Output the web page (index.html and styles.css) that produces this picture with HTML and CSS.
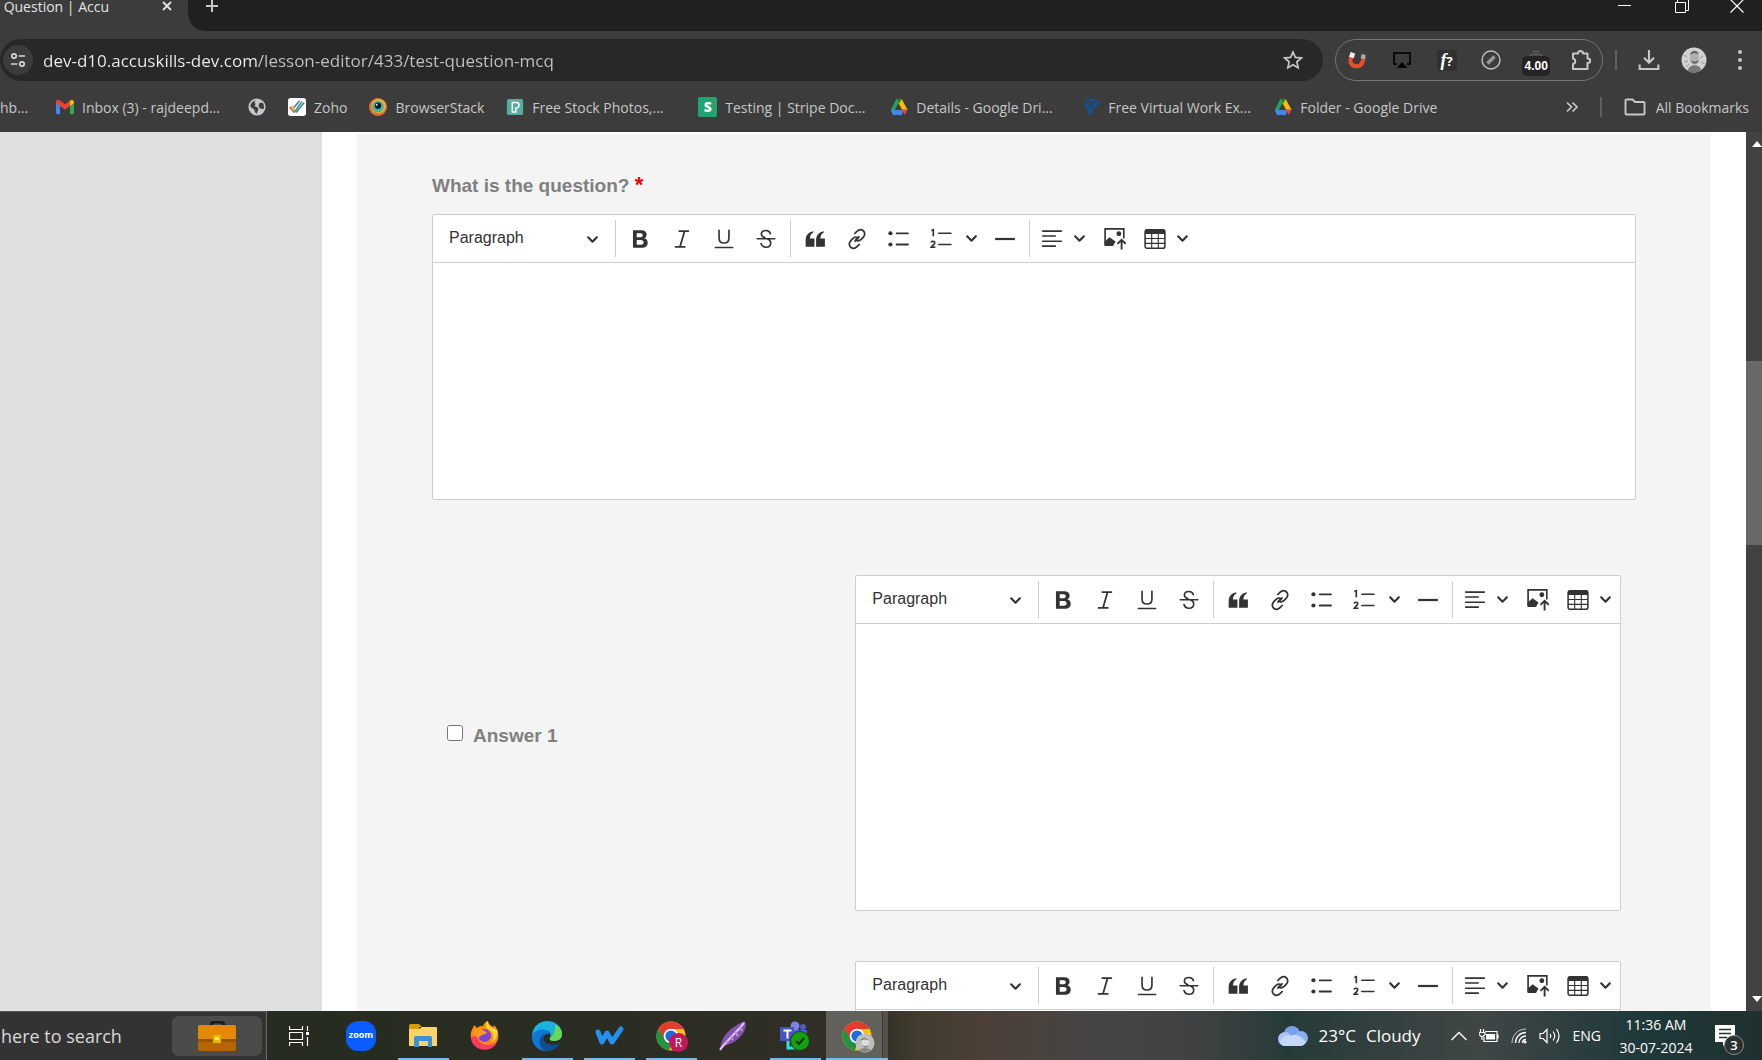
FILE: index.html
```html
<!DOCTYPE html>
<html lang="en">
<head>
    <meta charset="UTF-8">
    <meta name="viewport" content="width=device-width, initial-scale=1.0">
    <title>Test Question | Accuskills</title>
    <link rel="stylesheet" href="styles.css">
</head>
<body>

<!-- Shared icons -->
<svg class="sprite" aria-hidden="true">
    <symbol id="i-chevron" viewBox="0 0 12 12"><path d="M2 4l4 4 4-4" fill="none" stroke="currentColor" stroke-width="2" stroke-linecap="round" stroke-linejoin="round"/></symbol>
    <symbol id="i-bold" viewBox="0 0 20 20"><path fill="currentColor" fill-rule="evenodd" d="M3.6 2h7.6c3.2 0 4.8 1.500 4.8 3.900 0 1.700-.8 2.900-2.200 3.500 2 .5 3.200 1.900 3.200 4 0 2.900-2 4.600-5.400 4.600h-8zM7 4.700v3.600h3.500c1.300 0 2-.7 2-1.800s-.7-1.800-2-1.800zm0 6.100v4.400h3.900c1.600 0 2.400-.8 2.400-2.200s-.8-2.200-2.400-2.200z"/></symbol>
    <symbol id="i-italic" viewBox="0 0 20 20"><path d="M7.500 2.800h8.300M4.200 17.200h8.300M12.300 3L8.200 17" fill="none" stroke="currentColor" stroke-width="1.600" stroke-linecap="round"/></symbol>
    <symbol id="i-underline" viewBox="0 0 20 20"><path d="M5.500 2v7c0 3 1.700 4.600 4.500 4.600S14.500 12 14.500 9V2M2.200 17.700h15.600" fill="none" stroke="currentColor" stroke-width="1.500" stroke-linecap="round"/></symbol>
    <symbol id="i-strike" viewBox="0 0 20 20"><path d="M14 5.200C13.400 3.200 12 2.300 10 2.300c-2.500 0-4.200 1.300-4.200 3.200 0 1.800 1.200 2.800 3.300 3.500M2 9.800h16M11.500 10c1.800.7 2.800 1.700 2.800 3.600 0 2.400-1.700 3.900-4.300 3.900-2.500 0-4-1.200-4.500-3.400" fill="none" stroke="currentColor" stroke-width="1.500" stroke-linecap="round"/></symbol>
    <symbol id="i-quote" viewBox="0 0 20 20"><path fill="currentColor" d="M1.500 17v-6c0-4 2.500-7.300 7-8v1.100C6.500 5 5.500 6.800 5.400 9.500H9.500V17zm9.500 0v-6c0-4 2.500-7.300 7-8v1.100c-2 .9-3 2.700-3.100 5.400H19V17z"/></symbol>
    <symbol id="i-link" viewBox="0 0 20 20"><g fill="none" stroke="currentColor" stroke-width="1.600" stroke-linecap="round"><path d="M8 5l1.700-1.700c2-2 4.400-2.200 6-.8 1.800 1.600 1.700 4.100-.1 6l-1.800 1.900c-1.600 1.500-3.600 1.500-5 .3M12 15l-1.700 1.700c-2 2-4.400 2.200-6 .8-1.800-1.600-1.700-4.100.1-6l1.800-1.900c1.600-1.500 3.600-1.500 5-.3M8.200 12l3.600-4"/></g></symbol>
    <symbol id="i-bullets" viewBox="0 0 20 20"><g fill="currentColor"><circle cx="2.200" cy="4.800" r="1.900"/><circle cx="2.200" cy="15" r="1.900"/><rect x="7" y="4" width="12" height="1.600" rx=".8"/><rect x="7" y="14.200" width="12" height="1.600" rx=".8"/></g></symbol>
    <symbol id="i-numbers" viewBox="0 0 20 20"><g fill="none" stroke="currentColor" stroke-width="1.500"><path d="M1.200 2.200l1.800-.7v6M1 13.300c.2-1.800 3.500-1.700 3.300.2-.1 1.200-1.800 2.200-3.200 4h3.800"/><path d="M8 4.800h11M8 15h11" stroke-linecap="round"/></g></symbol>
    <symbol id="i-hr" viewBox="0 0 20 20"><rect x="1" y="9" width="18" height="2" fill="currentColor"/></symbol>
    <symbol id="i-align" viewBox="0 0 20 20"><path d="M1.500 2.800h17M1.500 7.300h11.500M1.500 12h17M1.500 16.500h11.500" fill="none" stroke="currentColor" stroke-width="1.500" stroke-linecap="round"/></symbol>
    <symbol id="i-image" viewBox="0 0 20 20"><path d="M1 15.300V.8h17v8.700" fill="none" stroke="currentColor" stroke-width="1.500"/><circle cx="13.500" cy="5.200" r="2.200" fill="currentColor"/><path fill="currentColor" d="M.5 12.500L5 8.500l5.500 3.800-2.300 4H.5z"/><path d="M16 19.500v-8M12.200 14.500l3.800-3.700 3.800 3.700" fill="none" stroke="currentColor" stroke-width="1.700"/></symbol>
    <symbol id="i-table" viewBox="0 0 20 20"><rect x="1" y="1.500" width="18" height="17" rx="2" fill="none" stroke="currentColor" stroke-width="1.400"/><path fill="currentColor" d="M1 5.500V3q0-2 2-2h14q2 0 2 2v2.500z"/><path d="M1 9.500h18M1 14h18M7 5v13.500M13 5v13.500" stroke="currentColor"/></symbol>
    <symbol id="i-drive" viewBox="0 0 20 20"><path fill="#1ea362" d="M7 1h5L5.500 13 3 18 1 13z"/><path fill="#fbbc04" d="M7 1h6l6.500 12H13z"/><path fill="#188038" d="M7 1h6l-3 5.500z"/><path fill="#4285f4" d="M.8 13h14l-1.500 6H3.500z"/><path fill="#ea4335" d="M13.200 13h6.300l-3 6z"/><path fill="#3c3c3c" d="M10 7l3.200 6H6.800z"/></symbol>
    <symbol id="i-chrome" viewBox="0 0 32 32"><circle cx="16" cy="16" r="15.500" fill="#fbc116"/><path fill="#e33b2e" d="M2.600 8.200A15.500 15.500 0 0 1 29.400 8.500H16L9 20z"/><path fill="#229342" d="M2.600 8.200L9.500 20l7 3.500-2.700 7.900A15.500 15.500 0 0 1 2.600 8.200z"/><circle cx="16" cy="16" r="7.800" fill="#fff"/><circle cx="16" cy="16" r="6" fill="#1a6de0"/></symbol>
</svg>

<!-- Toolbar used by every editor -->
<template id="editorTemplate">
    <div class="toolbar" role="toolbar" aria-label="Editor toolbar">
        <div class="heading">
            <select aria-label="Heading"><option>Paragraph</option></select>
            <svg class="arrow"><use href="#i-chevron"/></svg>
        </div>
        <span class="sep"></span>
        <button class="tool" title="Bold"><svg><use href="#i-bold"/></svg></button>
        <button class="tool" title="Italic"><svg><use href="#i-italic"/></svg></button>
        <button class="tool" title="Underline"><svg><use href="#i-underline"/></svg></button>
        <button class="tool" title="Strikethrough"><svg><use href="#i-strike"/></svg></button>
        <span class="sep"></span>
        <button class="tool" title="Block quote"><svg><use href="#i-quote"/></svg></button>
        <button class="tool" title="Link"><svg><use href="#i-link"/></svg></button>
        <button class="tool" title="Bulleted list"><svg><use href="#i-bullets"/></svg></button>
        <div class="split">
            <button class="tool" title="Numbered list"><svg><use href="#i-numbers"/></svg></button>
            <button class="tool-arrow" title="List properties"><svg class="arrow"><use href="#i-chevron"/></svg></button>
        </div>
        <button class="tool" title="Horizontal line"><svg><use href="#i-hr"/></svg></button>
        <span class="sep"></span>
        <button class="tool drop" title="Text alignment"><svg><use href="#i-align"/></svg><svg class="arrow"><use href="#i-chevron"/></svg></button>
        <button class="tool" title="Insert image"><svg><use href="#i-image"/></svg></button>
        <button class="tool drop" title="Insert table"><svg><use href="#i-table"/></svg><svg class="arrow"><use href="#i-chevron"/></svg></button>
    </div>
</template>

<header class="browser">
    <div class="tabstrip">
        <div class="tab">
            <span class="tab-title">t Question | Accu</span>
            <button class="tab-close" title="Close"><svg viewBox="0 0 12 12" width="12" height="12"><path d="M2 2l8 8M10 2l-8 8" stroke="#e3e3e3" stroke-width="1.800"/></svg></button>
        </div>
        <button class="new-tab" title="New tab"><svg viewBox="0 0 14 14" width="14" height="14"><path d="M7 1v12M1 7h12" stroke="#c7c7c7" stroke-width="2"/></svg></button>
        <div class="window-controls">
            <button title="Minimize"><svg viewBox="0 0 14 14" width="14" height="14"><path d="M0 6.500h13" stroke="#fff"/></svg></button>
            <button title="Restore"><svg viewBox="0 0 14 14" width="14" height="14"><path d="M.5 3.500h10v10H.5zM2.500 3V.5h11v11h-2.500" stroke="#fff" fill="none"/></svg></button>
            <button title="Close"><svg viewBox="0 0 14 14" width="14" height="14"><path d="M.5.5l13 13M13.500.5l-13 13" stroke="#fff" stroke-width="1.200"/></svg></button>
        </div>
    </div>

    <div class="addressbar">
        <div class="omnibox">
            <button class="site-info" title="Site information"><svg viewBox="0 0 16 16" width="16" height="16"><g fill="none" stroke="#d6d6d6" stroke-width="1.700"><circle cx="4" cy="4" r="2.200"/><path d="M8.500 4H15M1 12h6.500"/><circle cx="12" cy="12" r="2.200"/></g></svg></button>
            <input type="text" class="url" aria-label="Address" value="dev-d10.accuskills-dev.com/lesson-editor/433/test-question-mcq">
            <button class="star" title="Bookmark this tab"><svg viewBox="0 0 20 20" width="20" height="20"><path d="M10 2l2.400 5.400 5.900.6-4.400 3.900 1.200 5.800L10 14.700l-5.100 3 1.200-5.800L1.700 8l5.900-.6z" fill="none" stroke="#c7c7c7" stroke-width="1.700"/></svg></button>
        </div>
        <div class="extensions">
            <button title="Magnet"><svg viewBox="0 0 20 20" width="18" height="18"><path d="M4 5c-3 7-.5 12 5 12s8-4 8.300-10" fill="none" stroke="#ee4a2b" stroke-width="4.500"/><path d="M1.200 6.500l1.700-5.300 5 1.500-1.500 5.300z" fill="#f1f1f1"/><path d="M14 8l1-4.500 4.500.8-.5 4.500z" fill="#a9a9a9"/></svg></button>
            <button title="Cast"><svg viewBox="0 0 20 20" width="20" height="20"><path d="M5 14H2V3h16v11h-3" fill="none" stroke="#0c0c0c" stroke-width="2"/><path d="M4.500 18L10 12l5.500 6z" fill="#050505"/></svg></button>
            <button title="WhatFont"><span class="ext-font"><i>f</i>?</span></button>
            <button title="Notes"><svg viewBox="0 0 20 20" width="20" height="20"><circle cx="10" cy="10" r="9" fill="none" stroke="#c0c0c0" stroke-width="1.400"/><path d="M6.500 13.500l7-7" stroke="#9a9a9a" stroke-width="3.500"/></svg></button>
            <button title="Timer" class="timer"><svg viewBox="0 0 20 20" width="20" height="20"><path d="M7 1.500h6M3 7c2-4 12-4 14 0M10 4v3" fill="none" stroke="#5b5b5b" stroke-width="1.500"/></svg><span class="ext-badge">4.00</span></button>
            <button title="Extensions"><svg viewBox="0 0 22 22" width="22" height="22"><path d="M3 4.500h5c0-3.500 5-3.500 5 0h4.500v5c3.500 0 3.500 4.500 0 4.500v6H3v-5c3-.5 3-5 0-5.500z" fill="none" stroke="#c7c7c7" stroke-width="2" stroke-linejoin="round"/></svg></button>
        </div>
        <span class="bar-sep"></span>
        <button class="download" title="Downloads"><svg viewBox="0 0 20 20" width="22" height="22"><path d="M10 1v11M5.500 8l4.500 4.500L14.500 8M1.500 14v4.200h17V14" fill="none" stroke="#c7c7c7" stroke-width="1.900"/></svg></button>
        <button class="avatar" title="Profile"><svg viewBox="0 0 26 26" width="26" height="26"><circle cx="13" cy="13" r="12.500" fill="#d2d2d2"/><path d="M9 9c0-6 8-6 8.500-1l.5 5c-1 6-8 6-9 1z" fill="#b0b0b0"/><path d="M8.500 8c2-5 7-6 9.500-1-3-1-6-1-9.500 1zM10 13c2 2 5 2 7.500 0 0 4-6 6-7.500 0z" fill="#666"/><path d="M7 24c0-7 12-8 13-1-3 3-10 4-13 1z" fill="#787878"/><path d="M3 8l3 2M3 15l4-1M22 9l-3 2M20 15l4 2M5 20l3-3" stroke="#999"/></svg></button>
        <button class="menu" title="Menu"><svg viewBox="0 0 4 20" width="4" height="20"><g fill="#c7c7c7"><circle cx="2" cy="2" r="2"/><circle cx="2" cy="10" r="2"/><circle cx="2" cy="18" r="2"/></g></svg></button>
    </div>

    <nav class="bookmarks">
        <a href="#" class="first">hb...</a>
        <a href="#" class="wide"><svg viewBox="0 0 20 20"><path fill="#4285f4" d="M0 4l4.500 3.500V18H1.500Q0 18 0 16.500z"/><path fill="#34a853" d="M20 4l-4.500 3.500V18h3q1.500 0 1.500-1.500z"/><path fill="#ea4335" d="M0 5V4c0-2 2.500-2.700 4-1.500L10 7l6-4.500v5.800L10 13 0 5.500z"/><path fill="#fbbc04" d="M15.500 3C17.500 1.300 20 2.300 20 4.500v1l-4.500 3.400z"/></svg>Inbox (3) - rajdeepd...</a>
        <a href="#" title="New page"><svg viewBox="0 0 20 20"><circle cx="10" cy="10" r="9.500" fill="#c4c7cc"/><path fill="#3c3c3c" d="M9 2.500c-2 1-2 2.500-1 3.500s-.5 2-1 3.500c2 0 4 .5 4.500 2.500.5 1.500-1.500 2-1.500 5.500-2-.5-2.500-3-3-4.500L2.500 9.500C3 6 5.500 3 9 2.500zM12 7c1-2 3-2 4.500-1.500 1 1.500 1.500 3 1 6.500-2 1-5-.5-5.500-2.500z"/></svg></a>
        <a href="#"><svg viewBox="0 0 20 20"><rect width="20" height="20" rx="3" fill="#fff"/><g fill="none" stroke-width="1.800"><path d="M2 10l5 6" stroke="#e0483c"/><path d="M4 8.500l5 6" stroke="#f3b530"/><path d="M7 16L15.500 4" stroke="#3a9f50"/><path d="M9 16l9-11M6.500 10.500L13 3" stroke="#3e7ec9"/></g></svg>Zoho</a>
        <a href="#"><svg viewBox="0 0 20 20"><circle cx="10" cy="10" r="10" fill="#e66f32"/><circle cx="10.500" cy="9" r="8" fill="#e9b83e"/><circle cx="10" cy="9.500" r="6.500" fill="#5fb257"/><circle cx="10" cy="9" r="5.200" fill="#35b5d5"/><circle cx="10" cy="8.500" r="3.500" fill="#16171b"/><circle cx="8.500" cy="7.500" r="1" fill="#fff"/></svg>BrowserStack</a>
        <a href="#" class="wide"><svg viewBox="0 0 20 20"><rect x="1" y="1" width="18" height="18" rx="2" fill="#55ada0"/><path d="M7 15.500V5h4.500c4 0 4 6 0 6H11v4.500z" fill="none" stroke="#fff" stroke-width="1.600"/></svg>Free Stock Photos,...</a>
        <a href="#" class="wide"><span class="stripe">S</span>Testing | Stripe Doc...</a>
        <a href="#" class="wide"><svg><use href="#i-drive"/></svg>Details - Google Dri...</a>
        <a href="#" class="wide"><svg viewBox="0 0 20 20"><path fill="#174f94" d="M3 1h13l-3 3H6zM1 6l6-1 3 3-5 3zM14 5l5-2 1 3-6 5-4-2zM5 12l5-2 3 2-2 7-3-1z"/></svg>Free Virtual Work Ex...</a>
        <a href="#"><svg><use href="#i-drive"/></svg>Folder - Google Drive</a>
        <button class="more" title="More bookmarks"><svg viewBox="0 0 12 12" width="12" height="12"><path d="M1 1.500L5.500 6 1 10.500M6.500 1.500L11 6l-4.500 4.500" fill="none" stroke="#c7c7c7" stroke-width="1.700"/></svg></button>
        <span class="bar-sep"></span>
        <a href="#" class="all"><svg viewBox="0 0 22 18" class="folder"><path d="M1.500 2v13.500q0 1 1 1h17q1 0 1-1V5q0-1-1-1H11L8.500 1.500H2.500q-1 0-1 1z" fill="none" stroke="#c7c7c7" stroke-width="1.900"/></svg>All Bookmarks</a>
    </nav>
</header>

<main class="page">
    <aside class="sidebar"></aside>
    <form class="panel">
        <label class="question-label" for="question">What is the question? <span class="required">*</span></label>
        <div class="editor">
            <textarea id="question"></textarea>
        </div>
        <div class="answer">
            <label class="answer-label"><input type="checkbox"> Answer 1</label>
            <div class="editor">
                <textarea aria-label="Answer 1 text"></textarea>
            </div>
        </div>
        <div class="answer">
            <label class="answer-label"><input type="checkbox" aria-label="Answer 2"></label>
            <div class="editor">
                <textarea aria-label="Answer 2 text"></textarea>
            </div>
        </div>
    </form>
    <div class="scrollbar">
        <svg viewBox="0 0 10 6" width="10" height="6"><path d="M5 0l5 6H0z" fill="#fff"/></svg>
        <div class="track"><div class="thumb"></div></div>
        <svg viewBox="0 0 10 6" width="10" height="6"><path d="M5 6l5-6H0z" fill="#fff"/></svg>
    </div>
</main>

<footer class="taskbar">
    <div class="search">
        <input type="text" aria-label="Search" placeholder="here to search">
        <button title="Search highlights"><svg viewBox="0 0 38 30" width="38" height="30"><path d="M13 5q0-4 4-4h5q4 0 4 4" fill="none" stroke="#1b1b1b" stroke-width="3"/><rect y="4" width="38" height="26" rx="2" fill="#b56600"/><path d="M0 18V6q0-2 2-2h34q2 0 2 2v12z" fill="#e28a06"/><path d="M0 18h38v3H0z" fill="#9a5200"/><rect x="15" y="14" width="8" height="8" fill="#e5b800"/><rect x="17" y="16" width="4" height="3" fill="#fff24a"/></svg></button>
    </div>
    <div class="apps">
        <button title="Task View"><svg viewBox="0 0 20 20" width="20" height="20"><path d="M.5 0v3.500h13V0M.5 20v-3.500h13V20M.5 6.500h13v7H.5zM18.500 0v5M18.500 11v9" fill="none" stroke="#fff" stroke-width="1.200"/><rect x="17" y="6" width="3" height="3" fill="#fff"/></svg></button>
        <button title="Zoom"><span class="zoom-logo">zoom</span></button>
        <button title="File Explorer" class="open"><svg viewBox="0 0 28 24" width="28" height="24"><path d="M0 2q0-2 2-2h8l3 3h-3v4H0z" fill="#dc9b0a"/><path d="M0 5h10l3-2h14q1 0 1 1v18H0z" fill="#fdd365"/><path d="M5 23V14q0-2 2-2h14q2 0 2 2v9h-4v-6h-9v6z" fill="#3992d6"/></svg></button>
        <button title="Firefox"><svg viewBox="0 0 30 30" width="30" height="30"><path fill="#ff8a16" d="M1 17C0 10 3 8 4 4l3 3c2-2 4-2 6-2 1-3 3-5 5-5 0 3 3 4 5 6 1-1 1-2 1-2 4 4 5 9 4 14-3 12-25 12-27-1z"/><path fill="#fb3b5e" d="M1 16c0 15 22 17 26 5-6 5-19 4-20-6z"/><path fill="#ffd53a" d="M18 0c-3 3-3 6 0 8 5 3 7 7 4 13 5-2 6-8 5-12l-2-1-3-1c-3-2-4-4-4-7z"/><circle cx="14.500" cy="14.500" r="6.500" fill="#8043d5"/><path fill="#ff9a1e" d="M4 9c4-2 8-1 10 1l3 1c-2 4-7 2-8 6-3-1-5-4-5-8z"/></svg></button>
        <button title="Edge" class="open"><svg viewBox="0 0 30 30" width="30" height="30"><path fill="#1ab0e2" d="M0 14C1 5 8 0 15 0c9 0 15 6 15 13 0 5-4 7-8 7-3 0-5-1-4-3 2-4-1-8-6-8-5 0-9 2-12 5z"/><path fill="#64d857" d="M23 3c5 3 7 6 7 10 0 5-4 7-8 7-3 0-5-1-4-3 2-1 6-5 5-14z"/><path fill="#0d78d4" d="M0 14c5-7 15-7 18-1-6-2-9 5-6 10 2 4 6 5 9 5-3 2-5 2-7 2C6 30-1 23 0 14z"/><path fill="#134d91" d="M12 13c-3 8 5 14 16 9-3 6-9 8-13 8-8-1-10-13-3-17z"/></svg></button>
        <button title="WorkFlowy" class="open"><svg viewBox="0 0 30 20" width="30" height="20"><path d="M4 6l4 10 5-9 5 9 9-13" fill="none" stroke="#2491ee" stroke-width="5" stroke-linecap="round" stroke-linejoin="round"/></svg></button>
        <button title="Chrome" class="open"><span class="chrome-icon"><svg width="30" height="30"><use href="#i-chrome"/></svg><span class="profile-badge">R</span></span></button>
        <button title="Feather"><svg viewBox="0 0 28 30" width="28" height="30"><path d="M1 29C2 14 12 6 26 0c3 9-5 18-13 22-5 2-8 2-12 7z" fill="#8453ad"/><path d="M1 29C7 20 16 13 25 2" stroke="#e1c5f4" stroke-width="2" fill="none"/><path d="M7 20l2 2M11 15l3 4M16 11l3 4M21 6l2 4" stroke="#b993d6" stroke-width="2"/></svg></button>
        <button title="Teams" class="open"><svg viewBox="0 0 30 30" width="30" height="30"><circle cx="15" cy="5" r="4.500" fill="#7b83eb"/><circle cx="23" cy="6" r="3" fill="#5059c9"/><path d="M10 9h17v12H10z" fill="#5059c9"/><path d="M8 20v7h8" stroke="#2ce1e6" stroke-width="3" fill="none"/><rect y="6" width="14" height="14" rx="1" fill="#4b53bc"/><path d="M3.500 9.500h8M7.500 9.500v8" stroke="#fff" stroke-width="2"/><circle cx="20" cy="20" r="9.500" fill="#13a10e" stroke="#1d3a17"/><path d="M16 20l3 3 5-6" fill="none" stroke="#122f0c" stroke-width="2"/></svg></button>
        <button title="Chrome" class="open active"><span class="chrome-icon"><svg width="30" height="30"><use href="#i-chrome"/></svg><svg class="profile-face" viewBox="0 0 20 20" width="20" height="20"><circle cx="10" cy="10" r="9.500" fill="#bdbdbd"/><path d="M6 7q4-6 9 0l-1 5q-4 4-7 0z" fill="#dcdcdc"/><path d="M5 8q4-7 10 0-5-3-10 0zM7 12q3 2 7 0-3 6-7 0zM4 17q6-4 12 0-6 4-12 0z" fill="#868686"/></svg></span></button>
    </div>
    <div class="tray">
        <button class="weather"><svg viewBox="0 0 30 20" width="30" height="20"><circle cx="14" cy="8" r="8" fill="#7ba1ea"/><circle cx="7" cy="13" r="7" fill="#a9c4f6"/><circle cx="23" cy="12" r="7" fill="#8aaef0"/><path d="M2 15q5-8 11-5 6-4 15 6-2 4-5 4H7q-4 0-5-5z" fill="#c4d8fb"/></svg><span>23°C</span><span>Cloudy</span></button>
        <button class="tray-icon" title="Show hidden icons"><svg viewBox="0 0 16 10" width="16" height="10"><path d="M.5 9L8 1.500 15.500 9" fill="none" stroke="#fff" stroke-width="1.400"/></svg></button>
        <button class="tray-icon" title="Battery"><svg viewBox="0 0 20 14" width="20" height="14"><path d="M6 2.500h12v10H5V8M19 5.500v4M1.500 0v3M4.500 0v3M0 3.500h6v2l-2 2H2l-2-2zM3 8v3" fill="none" stroke="#fff" stroke-width="1.200"/><rect x="7" y="5" width="9" height="5.500" fill="#fff"/></svg></button>
        <button class="tray-icon" title="Network"><svg viewBox="0 0 16 16" width="16" height="16"><g fill="none" stroke="#fff"><path d="M1 15C1 7 7 1 15 1" opacity=".7"/><path d="M4.500 15C4.500 9 9 4.500 15 4.500M8 15c0-4 3-7 7-7M11.500 15c0-2 1.500-3.500 3.500-3.500" stroke-width="1.300"/></g><circle cx="14" cy="14" r="1.500" fill="#fff"/></svg></button>
        <button class="tray-icon" title="Volume"><svg viewBox="0 0 22 18" width="22" height="18"><path d="M1 6.500h3l4-4v13l-4-4H1zM11 7q1.500 2 0 4M14 4.500q3.500 4.500 0 9M17.500 2q5 7 0 14" fill="none" stroke="#fff" stroke-width="1.200"/></svg></button>
        <button class="lang">ENG</button>
        <button class="clock"><span>11:36 AM</span><span>30-07-2024</span></button>
        <button class="notifications" title="Notifications"><svg viewBox="0 0 20 22" width="20" height="22"><path d="M0 0h20v17h-8l-4 4v-4H0z" fill="#fff"/><path d="M4 4.500h12M4 8.500h12M4 12.500h8" stroke="#22302f" stroke-width="1.300"/></svg><span class="count">3</span></button>
    </div>
</footer>

<script>
const template = document.getElementById('editorTemplate');

document.querySelectorAll('.editor').forEach(editor => {
    editor.prepend(template.content.cloneNode(true));
    editor.querySelectorAll('button').forEach(button => button.type = 'button');
});
</script>

</body>
</html>
```
FILE: styles.css
```css
* {
    box-sizing: border-box;
}
body {
    margin: 0;
    height: 100vh;
    display: flex;
    flex-direction: column;
    overflow: hidden;
    font-family: "Open Sans", "Noto Sans", sans-serif;
    background-color: #fff;
}
button {
    display: flex;
    align-items: center;
    justify-content: center;
    flex: none;
    padding: 0;
    border: none;
    background: none;
    font-family: inherit;
    color: inherit;
}
svg {
    display: block;
    flex: none;
}
.sprite {
    display: none;
}

/* Browser chrome */
.browser {
    flex: none;
    background-color: #3c3c3c;
    color: #c7c7c7;
}
.tabstrip {
    display: flex;
    height: 31px;
    background-color: #1f2120;
}
.tab {
    display: flex;
    width: 188px;
    height: 31px;
    padding-right: 15px;
    background-color: #3c3c3c;
    position: relative;
}
/* curve at the foot of the active tab */
.tab::after {
    content: "";
    position: absolute;
    left: 100%;
    bottom: 0;
    width: 16px;
    height: 16px;
    background: radial-gradient(circle at 100% 0, transparent 15px, #3c3c3c 16px);
}
.tab-title {
    display: flex;
    justify-content: flex-end;
    width: 109px;
    height: 14px;
    line-height: 14px;
    white-space: nowrap;
    font-size: 14px;
    color: #e3e3e3;
}
.tab-close,
.new-tab {
    height: 12px;
}
.tab-close {
    margin-left: auto;
}
.new-tab {
    margin-left: 17px;
}
.window-controls {
    display: flex;
    margin-left: auto;
    height: 12px;
}
.window-controls button {
    width: 57px;
}
.window-controls button:last-child {
    width: 48px;
    margin-right: 4px;
    padding-left: 6px;
}
.addressbar {
    display: flex;
    align-items: center;
    padding: 8px 20px 8px 0;
}
.omnibox {
    display: flex;
    align-items: center;
    flex: 1;
    height: 42px;
    padding: 0 20px 0 3px;
    border-radius: 21px;
    background-color: #282828;
}
.site-info {
    width: 30px;
    height: 30px;
    border-radius: 50%;
    background-color: #3c3c3c;
}
.url {
    flex: 1;
    min-width: 0;
    margin-left: 10px;
    padding: 0;
    border: none;
    outline: none;
    font-family: inherit;
    font-size: 17px;
    /* host is brighter than the path */
    background: linear-gradient(90deg, #f0f0f0 214px, #c3c3c3 214px);
    background-clip: text;
    -webkit-background-clip: text;
    -webkit-text-fill-color: transparent;
}
.extensions {
    display: flex;
    align-items: center;
    justify-content: space-between;
    width: 268px;
    height: 42px;
    margin-left: 12px;
    border: 1px solid #757575;
    border-radius: 21px;
}
.extensions button {
    width: 42px;
    height: 30px;
    position: relative;
}
.ext-font {
    width: 20px;
    line-height: 20px;
    border-radius: 3px;
    background-color: #303030;
    color: #fff;
    font-size: 13px;
    font-weight: bold;
}
.ext-font i {
    font-family: "Liberation Serif", serif;
    font-size: 18px;
}
.ext-badge {
    position: absolute;
    top: 11px;
    left: 7px;
    width: 28px;
    line-height: 20px;
    border-radius: 5px;
    background-color: #242424;
    color: #fff;
    font-family: "Liberation Sans", sans-serif;
    font-size: 12px;
    font-weight: bold;
}
.bar-sep {
    width: 2px;
    height: 20px;
    margin-left: 12px;
    background-color: #606060;
}
.download {
    margin-left: 21px;
}
.avatar {
    margin-left: 21px;
}
.menu {
    margin-left: 31px;
}
.bookmarks {
    display: flex;
    align-items: center;
    height: 43px;
    padding: 0 13px 7px 0;
    gap: 22px;
    font-size: 14px;
    white-space: nowrap;
}
.bookmarks a {
    display: flex;
    align-items: center;
    gap: 8px;
    color: inherit;
    text-decoration: none;
}
.bookmarks a svg {
    width: 18px;
    height: 18px;
}
.bookmarks a .folder {
    width: 22px;
}
.bookmarks .first {
    width: 34px;
}
.bookmarks .wide {
    width: 170px;
}
.stripe {
    width: 19px;
    line-height: 20px;
    border-radius: 2px;
    background-color: #1fa571;
    color: #fff;
    text-align: center;
    font-weight: 800;
}
.more {
    margin-left: auto;
}
.bookmarks .bar-sep {
    margin-left: 0;
}
.bookmarks .all {
    gap: 10px;
}

/* Lesson editor page */
.page {
    flex: 1;
    min-height: 0;
    display: flex;
    overflow: hidden;
}
.sidebar {
    width: 322px;
    flex: none;
    background-color: #e0e0e0;
}
.panel {
    flex: 1;
    min-width: 0;
    margin: 2px 35px 0;
    padding: 40px 75px 0;
    background-color: #f4f4f4;
    font-family: "Liberation Sans", Arial, sans-serif;
    color: #808080;
}
.question-label,
.answer-label {
    font-size: 19px;
    font-weight: bold;
    line-height: 24px;
}
.question-label {
    display: block;
    margin-bottom: 16px;
}
.required {
    color: #f00000;
    font-size: 22px;
    line-height: 20px;
}
.editor {
    border: 1px solid #ccced1;
    border-radius: 2px;
    background-color: #fff;
    color: #333;
}
.editor textarea {
    display: block;
    width: 100%;
    height: 236px;
    padding: 12px;
    border: none;
    outline: none;
    resize: none;
    background: none;
    font-family: inherit;
    font-size: 16px;
}
.toolbar {
    display: flex;
    align-items: center;
    gap: 4px;
    height: 48px;
    border-bottom: 1px solid #ccced1;
}
.heading {
    position: relative;
    width: 177px;
}
.heading select {
    width: 100%;
    height: 38px;
    padding: 0 0 2px 16px;
    border: none;
    appearance: none;
    background: none;
    font-family: inherit;
    font-size: 16px;
    color: #333;
}
.heading .arrow {
    position: absolute;
    right: 11px;
    top: 13px;
}
.toolbar .sep {
    width: 1px;
    height: 37px;
    margin: 0 1px;
    background-color: #ccced1;
}
.tool {
    width: 38px;
    height: 38px;
}
.tool svg {
    width: 22px;
    height: 22px;
}
.toolbar .arrow {
    width: 13px;
    height: 13px;
}
.split {
    display: flex;
}
.tool-arrow {
    width: 22px;
}
.drop {
    width: 57px;
    gap: 10px;
}
.answer {
    display: grid;
    grid-template-columns: 8fr 15fr;
    align-items: center;
    margin-top: 50px;
    padding: 0 15px;
}
.editor + .answer {
    margin-top: 75px;
}
.answer .editor textarea {
    height: 286px;
}
.answer-label {
    display: flex;
    align-items: center;
    gap: 10px;
    padding-bottom: 14px;
}
.answer-label input {
    width: 16px;
    height: 16px;
    margin: 0 0 6px;
}
.scrollbar {
    flex: none;
    width: 16px;
    display: flex;
    flex-direction: column;
    align-items: flex-end;
    padding: 9px 0;
    background-color: #424242;
}
.scrollbar .track {
    flex: 1;
    width: 100%;
    padding-top: 214px;
}
.scrollbar .thumb {
    height: 184px;
    background-color: #686868;
}

/* Taskbar */
.taskbar {
    flex: none;
    display: flex;
    height: 49px;
    color: #fff;
    background: linear-gradient(90deg, #262c20 17%, #2b2d23 35%, #322f27 50%, #413b2e 52%, #4c4038 56%, #454545 63%, #3f4242 68%, #263b38 73%, #404646 84%, #20393b 93%, #1f302f);
}
.search {
    display: flex;
    align-items: center;
    width: 267px;
    padding: 0 4px 0 1px;
    border-top: 1px solid #555;
    border-right: 1px solid #6a6a6a;
    background-color: #333;
}
.search input {
    flex: 1;
    min-width: 0;
    padding: 0;
    border: none;
    outline: none;
    background: none;
    font-family: inherit;
    font-size: 18px;
}
.search input::placeholder {
    color: #d8d8d8;
}
.search button {
    width: 90px;
    height: 40px;
    border-radius: 7px;
    background-color: #4b4b4b;
}
.apps {
    display: flex;
    margin-left: 1px;
}
.apps button {
    position: relative;
    width: 62px;
}
.apps .open::after {
    content: "";
    position: absolute;
    left: 6px;
    right: 5px;
    bottom: 0;
    height: 2px;
    background-color: #76b9ed;
}
.apps .active {
    background: linear-gradient(90deg, #62605a 56px, #3b3934 56px, #3b3934 57px, #55524c 57px);
}
.apps .active::after {
    left: 0;
    right: 0;
}
.zoom-logo {
    width: 30px;
    height: 30px;
    border-radius: 12px;
    background-color: #0b5cff;
    line-height: 28px;
    font-size: 9px;
    font-weight: bold;
}
.chrome-icon {
    position: relative;
}
.profile-badge,
.profile-face {
    position: absolute;
    left: 13px;
    top: 12px;
}
.profile-badge {
    width: 19px;
    line-height: 19px;
    border-radius: 50%;
    background-color: #c2185b;
    font-size: 12px;
}
.tray {
    display: flex;
    align-items: center;
    margin-left: auto;
    padding-right: 27px;
    font-size: 15px;
}
.weather {
    gap: 10px;
    margin-right: 30px;
    font-size: 17px;
}
.tray-icon {
    margin-right: 12px;
}
.lang {
    margin-right: 16px;
    font-size: 14px;
}
.clock {
    flex-direction: column;
    width: 78px;
    font-size: 14px;
    line-height: 23px;
}
.notifications {
    position: relative;
    margin-left: 20px;
}
.count {
    position: absolute;
    left: 9px;
    top: 10px;
    width: 20px;
    line-height: 18px;
    border: 1px solid #8a8f8f;
    border-radius: 50%;
    background-color: #2b2f30;
    font-size: 13px;
    font-weight: 600;
}
```
